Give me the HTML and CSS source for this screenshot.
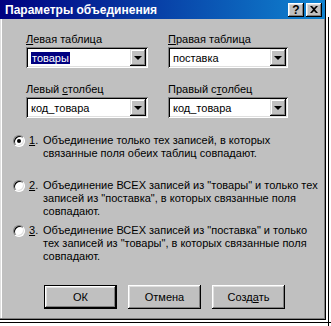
FILE: index.html
```html
<!DOCTYPE html>
<html lang="ru">
<head>
    <meta charset="UTF-8">
    <title>Параметры объединения</title>
    <link rel="stylesheet" href="styles.css">
</head>
<body>
    <div class="desk">
        <div class="window">
            <div class="titlebar">
                <span class="title">Параметры объединения</span>
                <div class="caption-buttons">
                    <span class="cap-btn">?</span>
                    <span class="cap-btn close">
                        <svg width="8" height="7" viewBox="0 0 8 7"><path d="M0 0h2l2 2 2-2h2L5 3.5 8 7H6L4 5 2 7H0l3-3.5z" fill="#000"/></svg>
                    </span>
                </div>
            </div>

            <div class="content">
                <div class="fields">
                    <div class="field">
                        <div class="label"><u>Л</u>евая таблица</div>
                        <div class="combo">
                            <div class="combo-value"><span class="selected">товары</span></div>
                            <span class="drop"></span>
                        </div>
                    </div>
                    <div class="field">
                        <div class="label"><u>П</u>равая таблица</div>
                        <div class="combo">
                            <div class="combo-value">поставка</div>
                            <span class="drop"></span>
                        </div>
                    </div>
                    <div class="field">
                        <div class="label">Левый <u>с</u>толбец</div>
                        <div class="combo">
                            <div class="combo-value">код_товара</div>
                            <span class="drop"></span>
                        </div>
                    </div>
                    <div class="field">
                        <div class="label">Правый с<u>т</u>олбец</div>
                        <div class="combo">
                            <div class="combo-value">код_товара</div>
                            <span class="drop"></span>
                        </div>
                    </div>
                </div>

                <div class="options">
                    <div class="option">
                        <span class="radio checked"></span>
                        <span class="num"><u>1</u>.</span>
                        <span class="text">Объединение только тех записей, в которых связанные поля обеих таблиц совпадают.</span>
                    </div>
                    <div class="option">
                        <span class="radio"></span>
                        <span class="num"><u>2</u>.</span>
                        <span class="text">Объединение ВСЕХ записей из "товары" и только тех записей из "поставка", в которых связанные поля совпадают.</span>
                    </div>
                    <div class="option">
                        <span class="radio"></span>
                        <span class="num"><u>3</u>.</span>
                        <span class="text">Объединение ВСЕХ записей из "поставка" и только тех записей из "товары", в которых связанные поля совпадают.</span>
                    </div>
                </div>

                <div class="buttons">
                    <div class="btn default"><span>ОК</span></div>
                    <div class="btn"><span>Отмена</span></div>
                    <div class="btn"><span>Созд<u>а</u>ть</span></div>
                </div>
            </div>
        </div>
    </div>
</body>
</html>
```

FILE: styles.css
```css
body {
    margin: 0;
    background: #fff;
    font-family: "Liberation Sans", Arial, sans-serif;
    font-size: 11px;
    color: #000;
}

/* white desktop behind the dialog, with the edge of another frame */
.desk {
    width: 331px;
    height: 326px;
    position: relative;
}

.desk::before {
    content: "";
    position: absolute;
    left: 328px;
    top: 17px;
    width: 1px;
    height: 309px;
    background: #000;
}

.desk::after {
    content: "";
    position: absolute;
    left: 0;
    top: 322px;
    width: 331px;
    height: 1px;
    background: #000;
}

.window {
    width: 326px;
    height: 320px;
    box-sizing: border-box;
    background: #c0c0c0;
    display: flex;
    flex-direction: column;
    box-shadow: inset -1px -1px #000, inset -2px -2px #808080, inset 1px 0 #dfdfdf, inset 2px 0 #fff;
}

.titlebar {
    height: 19px;
    flex-shrink: 0;
    display: flex;
    align-items: center;
    justify-content: space-between;
    padding: 0 3px 0 5px;
    margin-right: 1px;
    background: linear-gradient(to right, #000080, #1084d0);
}

.title {
    color: #fff;
    font-weight: bold;
    font-size: 12px;
}

.caption-buttons {
    display: flex;
    gap: 2px;
}

.cap-btn {
    width: 16px;
    height: 14px;
    box-sizing: border-box;
    background: #c0c0c0;
    display: flex;
    align-items: center;
    justify-content: center;
    font-weight: bold;
    font-size: 12px;
    box-shadow: inset -1px -1px #000, inset 1px 1px #fff, inset -2px -2px #808080, inset 2px 2px #dfdfdf;
}

.content {
    flex: 1;
    padding: 13px 0 0 26px;
    display: flex;
    flex-direction: column;
}

.fields {
    display: grid;
    grid-template-columns: 122px 120px;
    column-gap: 20px;
    row-gap: 14px;
}

.label {
    height: 14px;
    line-height: 14px;
    margin-bottom: 1px;
}

.combo {
    height: 21px;
    box-sizing: border-box;
    background: #fff;
    display: flex;
    align-items: center;
    padding: 2px;
    box-shadow: inset 1px 1px #808080, inset -1px -1px #fff, inset 2px 2px #000, inset -2px -2px #dfdfdf;
}

.combo-value {
    flex: 1;
    padding-left: 3px;
    line-height: 14px;
}

.selected {
    background: #000080;
    color: #fff;
    padding: 0 1px;
}

.drop {
    width: 16px;
    height: 17px;
    box-sizing: border-box;
    background: #c0c0c0;
    position: relative;
    box-shadow: inset -1px -1px #000, inset 1px 1px #dfdfdf, inset -2px -2px #808080, inset 2px 2px #fff;
}

.drop::after {
    content: "";
    position: absolute;
    left: 4px;
    top: 7px;
    border-left: 4px solid transparent;
    border-right: 4px solid transparent;
    border-top: 4px solid #000;
}

.options {
    margin: 16px 0 0 -13px;
    display: flex;
    flex-direction: column;
    gap: 6px;
}

.option {
    display: flex;
    align-items: flex-start;
    line-height: 13px;
    min-height: 39px;
}

.radio {
    width: 12px;
    height: 12px;
    box-sizing: border-box;
    border-radius: 50%;
    background: #fff;
    margin-top: 1px;
    flex-shrink: 0;
    position: relative;
    border: 1px solid;
    border-color: #808080 #fff #fff #808080;
    box-shadow: inset 1px 1px #000, inset -1px -1px #dfdfdf;
}

.radio.checked::after {
    content: "";
    position: absolute;
    left: 3px;
    top: 3px;
    width: 4px;
    height: 4px;
    border-radius: 50%;
    background: #000;
}

.num {
    width: 14px;
    margin-left: 4px;
    flex-shrink: 0;
}

.text {
    width: 280px;
}

.buttons {
    display: flex;
    gap: 11px;
    margin: 22px 0 0 18px;
}

.btn {
    width: 73px;
    height: 24px;
    box-sizing: border-box;
    background: #c0c0c0;
    display: flex;
    align-items: center;
    justify-content: center;
    box-shadow: inset -1px -1px #000, inset 1px 1px #fff, inset -2px -2px #808080, inset 2px 2px #dfdfdf;
}

.btn.default {
    box-shadow: inset 0 0 0 1px #000, inset -2px -2px #000, inset 2px 2px #fff, inset -3px -3px #808080, inset 3px 3px #dfdfdf;
}
```
